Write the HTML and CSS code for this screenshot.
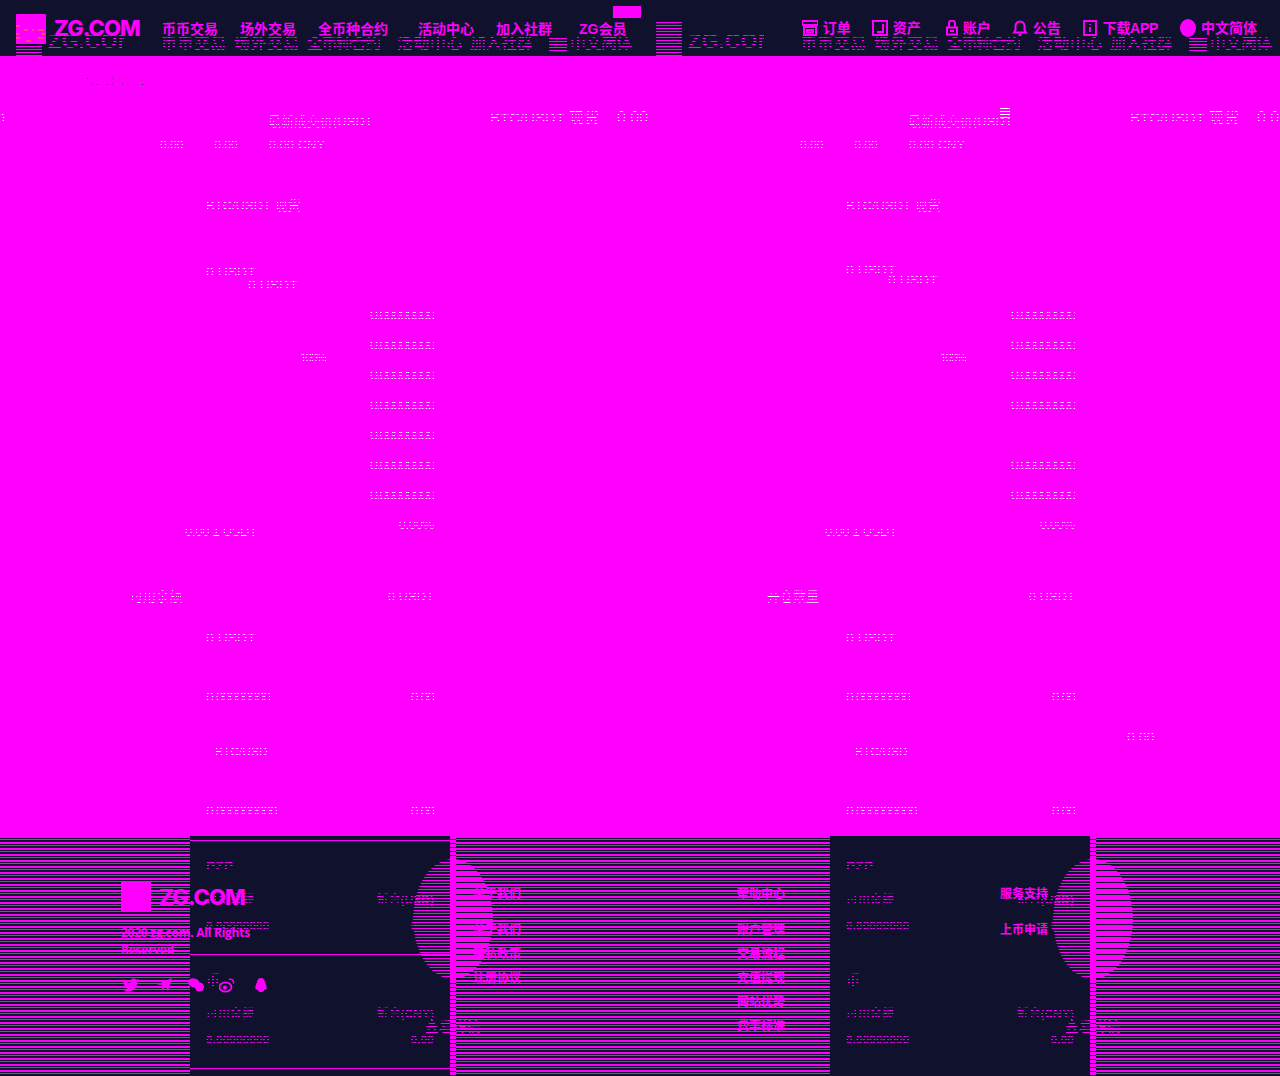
FILE: index.html
```html
<!DOCTYPE html>
<html lang="zh-CN">
<head>
<meta charset="utf-8">
<title>ZG.COM</title>
<link rel="stylesheet" href="styles.css">
</head>
<body>
<header class="topbar">
  <div class="ghost-head">
    <div class="ghost-cell">
      <span class="ghost-logo"></span><span class="ghost-brand">ZG.COM</span>
      <nav class="ghost-nav"><span>币币交易</span><span>场外交易</span><span>全币种合约</span><span>活动中心</span><span>加入社群</span><i></i><span>中文简体</span></nav>
    </div>
    <div class="ghost-cell">
      <span class="ghost-logo"></span><span class="ghost-brand">ZG.COM</span>
      <nav class="ghost-nav"><span>币币交易</span><span>场外交易</span><span>全币种合约</span><span>活动中心</span><span>加入社群</span><i></i><span>中文简体</span></nav>
    </div>
  </div>
  <div class="front-head">
    <svg class="logo" viewBox="0 0 30 30"><rect width="30" height="30" rx="1" fill="#f0f"/><path d="M0 12h4M8 16h4M16 16h2M22 16h6M0 20h3M26 20h3M0 24h4M10 27h5M22 24h6" stroke="#f80" stroke-width="1"/></svg>
    <span class="brand">ZG.COM</span>
    <nav class="nav-left">
      <a>币币交易</a><a>场外交易</a><a class="after-wide">全币种合约</a><a>活动中心</a><a class="after-mid">加入社群</a><a class="vip">ZG会员<b class="badge"></b></a>
    </nav>
    <nav class="nav-right">
      <a><svg viewBox="0 0 16 16"><path d="M0 1h16v4H0zM2 7h12v8H2zM5 10h6v2.500H5z" fill="none" stroke="#f0f" stroke-width="2"/></svg>订单</a>
      <a><svg viewBox="0 0 16 16"><path d="M1 1h14v14H1zM11 4v8H5" fill="none" stroke="#f0f" stroke-width="2"/></svg>资产</a>
      <a class="acc"><svg viewBox="0 0 16 16"><path d="M5 7V3.500a3 3 0 0 1 6 0V7M3 7.500h10v7H3zM6 11h4" fill="none" stroke="#f0f" stroke-width="2"/></svg>账户</a>
      <a><svg viewBox="0 0 16 16"><path d="M2 12.500h12l-1.500-2.500V6a4.500 4.500 0 0 0-9 0v4zM6.500 15h3" fill="none" stroke="#f0f" stroke-width="2"/></svg>公告</a>
      <a class="app"><svg viewBox="0 0 16 16"><path d="M2 1h12v14H2zM8 4v1M8 7v5" fill="none" stroke="#f0f" stroke-width="1.800"/></svg>下载APP</a>
      <a class="lang"><svg viewBox="0 0 16 18"><ellipse cx="8" cy="9" rx="8" ry="9" fill="#f0f"/></svg>中文简体</a>
    </nav>
  </div>
</header>

<main class="main">
  <div class="crumb"><span class="sparse-dark">交易中心 / BTC</span></div>
  <span class="wrap-digit dots">0</span>
  <section class="ticker">
    <div class="ticker-cell">
      <div class="ticker-top">
        <span class="dots t-label">最新成交价(USDT)</span>
        <span class="dots t-pair">BTC/USDT 现货</span>
        <span class="dots t-val">0.00</span>
      </div>
      <div class="ticker-sub"><span class="dots">0.00</span><span class="dots">0.00</span><span class="dots">0.00 CNY</span></div>
    </div>
    <div class="ticker-cell">
      <div class="ticker-top">
        <span class="dots t-label">最新成交价(USDT)</span><i class="bars"></i>
        <span class="dots t-pair">BTC/USDT 现货</span>
        <span class="dots t-val">0.00</span>
      </div>
      <div class="ticker-sub"><span class="dots">0.00</span><span class="dots">0.00</span><span class="dots">0.00 CNY</span></div>
    </div>
  </section>

  <section class="panels">
    <article class="panel">
      <div class="line title dots">BTC/USDT 现货</div>
      <div class="line pair-a dots">0 USDT</div>
      <div class="line pair-b dots">0 USDT</div>
      <div class="rows">
        <span class="pct dots">100%</span>
        <div class="row dots">0.00000000</div>
        <div class="row dots">0.00000000</div>
        <div class="row dots">0.00000000</div>
        <div class="row dots">0.00000000</div>
        <div class="row dots">0.00000000</div>
        <div class="row dots">0.00000000</div>
        <div class="row dots">0.00000000</div>
        <div class="row last"><span class="low dots">0.00 1 USDT</span><span class="dots">0.00%</span></div>
      </div>
      <div class="line avail"><span class="dots">可用余额</span><span class="dots">0 USDT</span></div>
      <div class="line s1 dots">0 USDT</div>
      <div class="line s2"><span class="dots">0.00000000</span><span class="dots">0.00</span></div>
      <div class="line s3 dots">BTC/USD</div>
      <div class="line s4"><span class="dots">0.000000000</span><span class="dots">0.00</span></div>
    </article>
    <article class="panel panel-b">
      <span class="stray dots">0.00</span>
      <div class="line title dots">BTC/USDT 现货</div>
      <div class="line pair-a dots">0 USDT</div>
      <div class="line pair-b dots">0 USDT</div>
      <div class="rows">
        <span class="pct dots">100%</span>
        <div class="row dots">0.00000000</div>
        <div class="row dots">0.00000000</div>
        <div class="row dots">0.00000000</div>
        <div class="row dots">0.00000000</div>
        <div class="row"></div>
        <div class="row dots">0.00000000</div>
        <div class="row dots">0.00000000</div>
        <div class="row last"><span class="low dots">0.00 1 USDT</span><span class="dots">0.00%</span></div>
      </div>
      <div class="line avail"><span class="dots">开仓数量</span><span class="dots">0 USDT</span></div>
      <div class="line s1 dots">0 USDT</div>
      <div class="line s2"><span class="dots">0.00000000</span><span class="dots">0.00</span></div>
      <div class="line s3 dots">BTC/USD</div>
      <div class="line s4"><span class="dots">0.000000000</span><span class="dots">0.00</span></div>
    </article>
  </section>
</main>

<footer class="footer">
  <div class="fcols">
    <div class="fcell">
      <div class="fpanel">
        <div class="fsec">
          <div class="ftitle scan">PZP</div>
          <div class="frow"><span class="scan">可用余额</span><span class="scan">折合(USD)</span></div>
          <div class="frow v"><span class="scan">0.00000000</span><span class="scan">0.00</span></div>
        </div>
        <div class="fsec">
          <div class="ftitle scan">币</div>
          <div class="frow"><span class="scan">可用余额</span><span class="scan">折合(CNY)</span></div>
          <div class="frow v"><span class="scan">0.00000000</span><span class="scan">0.00</span></div>
        </div>
        <div class="fsec fsec-end"></div>
        <span class="more scan">查看详情</span>
      </div>
      <div class="bar"><i></i></div>
      <span class="oval"></span>
    </div>
    <div class="fcell fcell-b">
      <div class="fpanel">
        <div class="fsec">
          <div class="ftitle scan">PZP</div>
          <div class="frow"><span class="scan">可用余额</span><span class="scan">折合(USD)</span></div>
          <div class="frow v"><span class="scan">0.00000000</span><span class="scan">0.00</span></div>
        </div>
        <div class="fsec">
          <div class="ftitle scan">币</div>
          <div class="frow"><span class="scan">可用余额</span><span class="scan">折合(CNY)</span></div>
          <div class="frow v"><span class="scan">0.00000000</span><span class="scan">0.00</span></div>
        </div>
        <span class="more scan">查看详情</span>
      </div>
      <div class="bar"><i></i></div>
      <span class="oval"></span>
    </div>
  </div>
  <div class="ffront">
    <div class="fbrand">
      <div class="fbrand-top"><span class="fsquare"></span><span class="brand">ZG.COM</span></div>
      <p class="copy">2020 zg.com. All Rights Reserved</p>
      <div class="social">
        <svg viewBox="0 0 16 16"><path d="M0 2c2 2.500 4 3.500 7 4C7 3 9 1 11 1.500c1.200 0 2 1 2.500 1.200L16 2l-1.500 2.500C14.500 10 10 15 4 14.500 2.500 14.500 1.500 14 .5 13.500c1.500 0 3-.5 4-1.500C2.500 11 1.500 9.500 1.200 8 .5 6 0 4 0 2z" fill="#f0f"/></svg>
        <svg viewBox="0 0 16 16"><path d="M15 1 11 14 8.500 9.500 5 14l.5-6L0 7.500z" fill="#f0f"/></svg>
        <svg viewBox="0 0 16 16"><ellipse cx="6" cy="6" rx="6" ry="4.500" transform="rotate(20 6 6)" fill="#f0f"/><ellipse cx="11.500" cy="10" rx="4.500" ry="4.500" fill="#f0f"/></svg>
        <svg viewBox="0 0 16 16"><ellipse cx="6.500" cy="10" rx="6" ry="4.700" fill="none" stroke="#f0f" stroke-width="1.800"/><circle cx="6" cy="10.500" r="2" fill="#f0f"/><path d="M10 2.500c3-1 5 1 4.500 4" fill="none" stroke="#f0f" stroke-width="1.500"/></svg>
        <svg viewBox="0 0 16 16"><path d="M8 1c3 0 4 2.500 4 4.500 1 1.500 2 4 1.500 6.500-.5 1-1.500.5-2 .5C11 14.500 9.500 15 8 15s-3-.5-3.500-2.500c-.5 0-1.500.5-2-.5C2 9.500 3 7 4 5.500 4 3.500 5 1 8 1z" fill="#f0f"/></svg>
      </div>
    </div>
    <ul class="flinks">
      <li class="head">关于我们</li><li>关于我们</li><li>隐私政策</li><li>注册协议</li>
    </ul>
    <ul class="flinks">
      <li class="head">帮助中心</li><li>账户管理</li><li>交易流程</li><li>充值提现</li><li>网站优势</li><li>费率标准</li>
    </ul>
    <ul class="flinks">
      <li class="head">服务支持</li><li>上币申请</li>
    </ul>
  </div>
</footer>
</body>
</html>
```

FILE: styles.css
```css
* { box-sizing: border-box; margin: 0; padding: 0; }
html, body { height: 1076px; overflow: hidden; }
body {
  background: #f0f;
  font-family: "Liberation Sans", "Noto Sans CJK SC", sans-serif;
  font-size: 14px;
  color: #f0f;
}
a, i, b { display: block; }
ul { list-style: none; }

.scan, .ghost-brand, .ghost-nav span {
  color: transparent;
  background: repeating-linear-gradient(#f0f 0 1px, transparent 1px 3px);
  -webkit-background-clip: text;
  background-clip: text;
}
.dots {
  color: transparent;
  background-image: repeating-linear-gradient(#fff 0 1px, transparent 1px 3px);
  -webkit-background-clip: text;
  background-clip: text;
}
.sparse-dark {
  color: transparent;
  background-image: conic-gradient(at 1px 1px, transparent 75%, #1c2a2a 0);
  background-size: 5px 6px;
  -webkit-background-clip: text;
  background-clip: text;
}

/* header */
.topbar { position: relative; height: 56px; background: #10122d; }
.ghost-head { position: absolute; inset: 0; display: grid; grid-template-columns: 640px 640px; overflow: hidden; }
.ghost-cell { display: flex; align-items: flex-start; padding: 22px 0 0 16px; min-width: 0; }
.ghost-logo {
  flex: none; width: 26px; height: 36px;
  background: repeating-linear-gradient(#f0f 0 1px, transparent 1px 3px);
}
.ghost-brand { flex: none; margin: 7px 0 0 6px; font-size: 22px; line-height: 24px; width: 76px; font-weight: 700; }
.ghost-nav { display: flex; flex: none; margin: 12px 0 0 37px; gap: 7px; font-size: 16px; line-height: 20px; font-weight: 700; }
.ghost-nav span { white-space: nowrap; letter-spacing: .5px; }
.ghost-nav span:nth-child(3) { letter-spacing: -1.400px; }
.ghost-nav span:nth-child(4) { margin-left: 10px; }
.ghost-nav span:nth-child(5) { letter-spacing: -.5px; }
.ghost-nav i { width: 18px; height: 14px; margin: 4px 0 0 10px; background: repeating-linear-gradient(#f0f 0 1px, transparent 1px 3px); }
.ghost-nav span:last-child { margin-left: -4px; letter-spacing: -.5px; }

.front-head { position: relative; display: flex; align-items: center; height: 56px; padding: 0 23px 0 16px; font-weight: 700; }
.logo { width: 30px; height: 30px; margin-top: 1px; flex: none; }
.brand { font-family: Inter, "Liberation Sans", sans-serif; font-weight: 800; font-size: 22px; line-height: 30px; letter-spacing: -1px; width: 86px; white-space: nowrap; }
.front-head .brand { margin-left: 8px; }
.nav-left { display: flex; gap: 22px; margin-left: 22px; line-height: 20px; padding-top: 2px; white-space: nowrap; }
.after-wide { margin-right: 8px; }
.after-mid { margin-right: 5px; }
.vip { position: relative; }
.badge { position: absolute; left: 34px; top: -13px; width: 28px; height: 12px; background: #f0f; }
.nav-right { display: flex; gap: 21px; margin-left: auto; line-height: 20px; white-space: nowrap; }
.nav-right a { display: flex; align-items: center; gap: 5px; }
.nav-right svg { width: 16px; height: 16px; flex: none; }
.nav-right .lang svg { height: 18px; }
.nav-right .acc { gap: 3px; margin-left: 2px; }
.nav-right .app { letter-spacing: -.3px; }
.nav-right .lang { margin-left: 1px; }

/* main */
.main { position: relative; height: 780px; background: #f0f; }
.crumb { padding: 19px 0 0 82px; height: 39px; font-size: 12px; line-height: 20px; }
.wrap-digit { position: absolute; left: -3px; top: 52px; font-size: 14px; line-height: 20px; }
.ticker { display: grid; grid-template-columns: 640px 640px; margin-top: 13px; overflow: hidden; }
.ticker-cell { padding-left: 160px; min-width: 0; }
.ticker-top { display: flex; height: 24px; padding-left: 108px; white-space: nowrap; font-size: 14px; line-height: 20px; }
.t-label { width: 102px; margin-top: 4px; font-size: 13px; flex: none; }
.t-pair { margin-left: 120px; width: 127px; flex: none; font-size: 15px; }
.t-val { font-size: 16px; flex: none; }
.bars { width: 10px; height: 12px; margin-left: -10px; flex: none; background: repeating-linear-gradient(#fff 0 1px, transparent 1px 3px); }
.ticker-sub { display: flex; gap: 31px; margin-top: 3px; font-size: 12px; line-height: 20px; }
.ticker-sub span:last-child { font-size: 13px; }

.panels { display: grid; grid-template-columns: 640px 640px; }
.panel { position: relative; padding: 0 206px; height: 625px; font-size: 14px; }
.panel-b { padding-right: 205px; }
.line { height: 20px; line-height: 20px; white-space: nowrap; }
.line > span { display: block; }
.title { margin-top: 41px; font-size: 13px; }
.pair-a { margin-top: 46px; }
.pair-b { margin-top: -7px; margin-left: 42px; }
.panel-b .pair-a { margin-top: 44px; }
.panel-b .pair-b { margin-top: -10px; }
.rows { position: relative; margin-top: 5px; }
.panel-b .rows { margin-top: 10px; }
.row { display: flex; justify-content: flex-end; height: 30px; line-height: 30px; font-size: 15px; letter-spacing: -1.500px; }
.row.last { justify-content: space-between; margin-left: -21px; font-size: 13px; letter-spacing: -.3px; }
.low { margin-top: 7px; }
.pct { position: absolute; left: 94px; top: 48px; font-size: 12px; letter-spacing: -1.300px; line-height: 20px; }
.avail { display: flex; justify-content: space-between; margin-top: 47px; margin-left: -76px; font-size: 13px; }
.panel-b .avail { margin-left: -79px; }
.s1 { margin-top: 21px; }
.s2 { display: flex; justify-content: space-between; margin-top: 39px; font-size: 14px; letter-spacing: -1px; }
.s3 { margin-top: 35px; margin-left: 9px; font-size: 12px; }
.s4 { display: flex; justify-content: space-between; margin-top: 39px; font-size: 14px; letter-spacing: -1px; }
.stray { position: absolute; left: 487px; top: 572px; font-size: 14px; line-height: 20px; }

/* footer */
.footer {
  position: relative; height: 240px;
  background: repeating-linear-gradient(#f0f 0 2px, #10122d 2px 3px, #f0f 3px 4px, #10122d 4px 6px);
}
.fcols { display: grid; grid-template-columns: 640px 640px; height: 240px; }
.fcell { position: relative; display: flex; padding-left: 190px; }
.fpanel { position: relative; width: 260px; height: 240px; padding-top: 4px; background: #10122d; font-size: 12px; }
.fsec { height: 114px; padding: 15px 16px 0; border-top: 1px solid #f0f; }
.fsec-end { height: 8px; padding: 0; }
.fcell-b .fsec { border-top-color: transparent; }
.ftitle { height: 20px; line-height: 20px; font-size: 14px; font-weight: 700; width: max-content; }
.frow { display: flex; justify-content: space-between; height: 20px; line-height: 20px; margin-top: 14px; font-size: 12px; font-weight: 700; }
.frow.v { margin-top: 6px; }
.more { position: absolute; left: 235px; top: 181px; font-size: 14px; line-height: 20px; font-weight: 700; white-space: nowrap; }
.bar { position: relative; width: 6px; height: 240px; background: repeating-linear-gradient(#f0f 0 3px, #10122d 3px 4px); }
.bar i { position: absolute; left: 0; top: 22px; width: 6px; height: 122px; background: #f0f; }
.oval {
  position: absolute; left: 413px; top: 23px; width: 80px; height: 120px; border-radius: 50%;
  background: repeating-linear-gradient(#f0f 0 1px, transparent 1px 3px);
}

.ffront {
  position: absolute; inset: 0; display: grid;
  grid-template-columns: 352px 264px 263px 1fr;
  padding: 46px 0 0 121px; font-size: 12px; font-weight: 700;
}
.fbrand { width: 140px; }
.fbrand-top { display: flex; align-items: center; gap: 8px; height: 30px; white-space: nowrap; }
.fsquare { width: 30px; height: 30px; background: #f0f; flex: none; }
.copy { margin-top: 12px; font-family: "Open Sans", sans-serif; font-size: 12px; letter-spacing: -.25px; line-height: 17px; }
.social { display: flex; margin: 19px 0 0 2px; width: 160px; }
.social svg { width: 16px; height: 16px; flex: none; margin-left: 15px; }
.social svg:first-child { margin-left: 0; }
.social svg:nth-child(2), .social svg:nth-child(5) { margin-left: 18px; }
.flinks { line-height: 24px; }
.flinks li { white-space: nowrap; }
.flinks .head { margin-bottom: 12px; }
```
